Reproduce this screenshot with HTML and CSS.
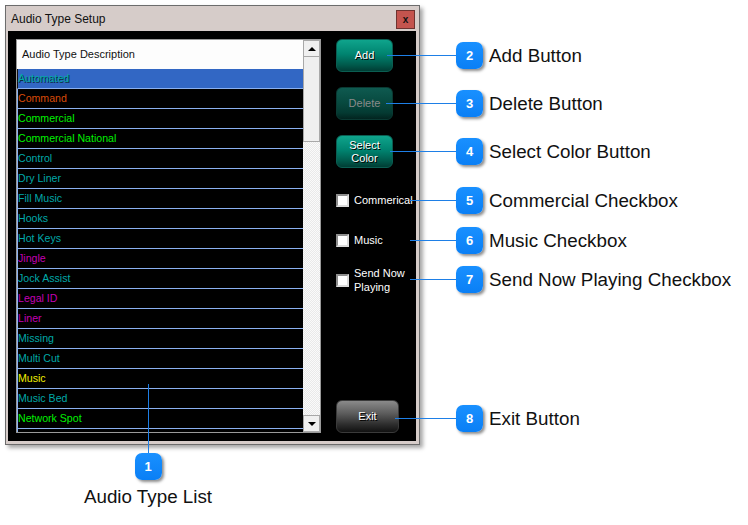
FILE: index.html
```html
<!DOCTYPE html>
<html lang="en">
<head>
  <meta charset="UTF-8" />
  <title>Audio Type Setup</title>
  <link rel="stylesheet" href="styles.css">
</head>
<body>

  <div class="window">
    <div class="title-bar">
      <span class="title">Audio Type Setup</span>
      <span class="close">x</span>
    </div>
    <div class="window-body">
      <div class="listbox">
        <div class="list-main">
          <div class="list-header">Audio Type Description</div>
          <div class="row selected c-teal">Automated</div>
          <div class="row c-orange">Command</div>
          <div class="row c-green">Commercial</div>
          <div class="row c-green">Commercial National</div>
          <div class="row c-teal">Control</div>
          <div class="row c-teal">Dry Liner</div>
          <div class="row c-teal">Fill Music</div>
          <div class="row c-teal">Hooks</div>
          <div class="row c-teal">Hot Keys</div>
          <div class="row c-magenta">Jingle</div>
          <div class="row c-teal">Jock Assist</div>
          <div class="row c-magenta">Legal ID</div>
          <div class="row c-magenta">Liner</div>
          <div class="row c-teal">Missing</div>
          <div class="row c-teal">Multi Cut</div>
          <div class="row c-yellow">Music</div>
          <div class="row c-teal">Music Bed</div>
          <div class="row c-green">Network Spot</div>
          <div class="row"></div>
        </div>
        <div class="scrollbar">
          <div class="sb-btn"><span class="arrow-up"></span></div>
          <div class="sb-thumb"></div>
          <div class="sb-track"></div>
          <div class="sb-btn"><span class="arrow-down"></span></div>
        </div>
      </div>

      <div class="side">
        <div class="btn btn-teal btn-add">Add</div>
        <div class="btn btn-dim">Delete</div>
        <div class="btn btn-teal btn-two">Select<br>Color</div>
        <label class="check check-1"><span class="box"></span>Commerical</label>
        <label class="check check-2"><span class="box"></span>Music</label>
        <label class="check check-3"><span class="box"></span><span>Send Now<br>Playing</span></label>
        <div class="btn btn-gray btn-exit">Exit</div>
      </div>
    </div>
  </div>

  <!-- callouts -->
  <div class="callout c2"><div class="line w69"></div><div class="badge">2</div><div class="label">Add Button</div></div>
  <div class="callout c3"><div class="line w70"></div><div class="badge">3</div><div class="label">Delete Button</div></div>
  <div class="callout c4"><div class="line w66"></div><div class="badge">4</div><div class="label">Select Color Button</div></div>
  <div class="callout c5"><div class="line w46"></div><div class="badge">5</div><div class="label">Commercial Checkbox</div></div>
  <div class="callout c6"><div class="line w46"></div><div class="badge">6</div><div class="label">Music Checkbox</div></div>
  <div class="callout c7"><div class="line w46"></div><div class="badge">7</div><div class="label">Send Now Playing Checkbox</div></div>
  <div class="callout c8"><div class="line w61"></div><div class="badge">8</div><div class="label">Exit Button</div></div>

  <div class="callout-v c1">
    <div class="vline"></div>
    <div class="badge">1</div>
    <div class="label">Audio Type List</div>
  </div>

</body>
</html>
```

FILE: styles.css
```css
body {
  margin: 0;
  font-family: 'Liberation Sans', Arial, sans-serif;
  background-color: #fff;
  width: 748px;
  height: 525px;
  overflow: hidden;
}

.window {
  margin: 5px 0 0 5px;
  width: 413px;
  height: 438px;
  border: 1px solid #6c6c6c;
  background-color: #d6ccc9;
  box-shadow: 3px 3px 4px rgba(0,0,0,0.35);
  display: flex;
  flex-direction: column;
}

.title-bar {
  height: 25px;
  display: flex;
  align-items: center;
  justify-content: space-between;
  padding: 0 4px 0 5px;
}

.title {
  font-size: 12px;
  color: #111;
}

.close {
  width: 19px;
  height: 19px;
  box-sizing: border-box;
  border: 1px solid #6e3330;
  background-color: #c4544e;
  color: #111;
  font-size: 10px;
  font-weight: bold;
  display: flex;
  align-items: center;
  justify-content: center;
  margin-top: 1px;
}

.window-body {
  flex: 1;
  margin: 0 3px 3px 2px;
  background-color: #000;
  display: flex;
  padding: 8px 0 0 8px;
}

/* list */
.listbox {
  width: 303px;
  height: 392px;
  border: 1px solid #9a9a9a;
  display: flex;
  background-color: #000;
}

.list-main {
  width: 286px;
  overflow: hidden;
}

.list-header {
  height: 29px;
  background-color: #fdfdfd;
  color: #111;
  font-size: 11px;
  line-height: 29px;
  padding-left: 5px;
}

.row {
  height: 20px;
  box-sizing: border-box;
  border-left: 1px solid #8ab0f0;
  border-bottom: 1px solid #8ab0f0;
  font-size: 10.6px;
  line-height: 19px;
  white-space: nowrap;
}

.row.selected {
  background-color: #3267c4;
  border-left: 1px solid #111;
  text-shadow: 1px 1px 0 #0a2a40;
}

.c-teal { color: #00a8a8; }
.c-orange { color: #d84a08; }
.c-green { color: #00f000; }
.c-magenta { color: #c400b4; }
.c-yellow { color: #f0f000; }

.scrollbar {
  width: 17px;
  display: flex;
  flex-direction: column;
  background-color: #f4f4f4;
}

.sb-btn {
  height: 17px;
  box-sizing: border-box;
  border: 1px solid #a8a8a8;
  background-color: #f0f0f0;
  display: flex;
  align-items: center;
  justify-content: center;
}

.arrow-up {
  border-left: 4px solid transparent;
  border-right: 4px solid transparent;
  border-bottom: 4px solid #000;
}

.arrow-down {
  border-left: 4px solid transparent;
  border-right: 4px solid transparent;
  border-top: 4px solid #000;
}

.sb-thumb {
  height: 85px;
  box-sizing: border-box;
  border: 1px solid #a8a8a8;
  border-top: none;
  background-color: #efefef;
}

.sb-track {
  flex: 1;
  background-image: repeating-conic-gradient(#fafafa 0 25%, #e9e9e9 0 50%);
  background-size: 2px 2px;
}

/* side controls */
.side {
  margin-left: 15px;
  display: flex;
  flex-direction: column;
  align-items: flex-start;
  padding-bottom: 8px;
}

.btn {
  width: 57px;
  height: 33px;
  box-sizing: border-box;
  border-radius: 6px;
  display: flex;
  align-items: center;
  justify-content: center;
  text-align: center;
  font-size: 11px;
  line-height: 13px;
  color: #fff;
  text-shadow: 1px 1px 0 #000;
}

.btn + .btn {
  margin-top: 15px;
}

.btn-teal {
  background: linear-gradient(#0fa48c, #008470 45%, #005a4c 80%, #003d34);
  border: 1px solid #0b5e52;
}

.btn-dim {
  background: linear-gradient(#0f5a50, #084a40 45%, #043a32 80%, #02241f);
  border: 1px solid #0a3a33;
  color: #8a8a8a;
  text-shadow: none;
}

.btn-gray {
  background: linear-gradient(#8a8a8a, #5c5c5c 40%, #2e2e2e 75%, #111);
  border: 1px solid #3a3a3a;
  width: 63px;
  margin-top: auto;
}

.check {
  display: flex;
  align-items: center;
  color: #fff;
  font-size: 11px;
  line-height: 14px;
}

.box {
  width: 13px;
  height: 13px;
  box-sizing: border-box;
  background-color: #fff;
  border: 2px solid #8e8e8e;
  border-right-color: #dcdcdc;
  border-bottom-color: #dcdcdc;
  margin-right: 5px;
}

.check-1 { margin-top: 25px; }
.check-2 { margin-top: 26px; }
.check-3 { margin-top: 19px; }

/* callouts */
.callout {
  position: absolute;
  display: flex;
  align-items: center;
  height: 27px;
}

.line {
  height: 1px;
  background-color: #1e7fe6;
}

.w46 { width: 46px; }
.w61 { width: 61px; }
.w66 { width: 66px; }
.w69 { width: 69px; }
.w70 { width: 70px; }

.badge {
  width: 27px;
  height: 27px;
  border-radius: 7px;
  background: linear-gradient(#1990ff, #0a7ff5);
  color: #fff;
  font-size: 13px;
  font-weight: bold;
  display: flex;
  align-items: center;
  justify-content: center;
  box-shadow: 2px 2px 3px rgba(0,0,0,0.45);
  flex: none;
}

.label {
  margin-left: 6px;
  font-size: 18.8px;
  color: #111;
  white-space: nowrap;
}

.c2 { left: 387px; top: 42px; }
.c3 { left: 386px; top: 90px; }
.c4 { left: 390px; top: 138px; }
.c5 { left: 410px; top: 187px; }
.c6 { left: 410px; top: 227px; }
.c7 { left: 410px; top: 266px; }
.c8 { left: 395px; top: 405px; }

.callout-v {
  position: absolute;
  display: flex;
  flex-direction: column;
  align-items: center;
  width: 130px;
}

.c1 { left: 83px; top: 384px; }

.vline {
  width: 1px;
  height: 69px;
  background-color: #1e7fe6;
  margin-left: 1px;
}

.callout-v .label {
  margin: 6px 0 0 0;
}
```
